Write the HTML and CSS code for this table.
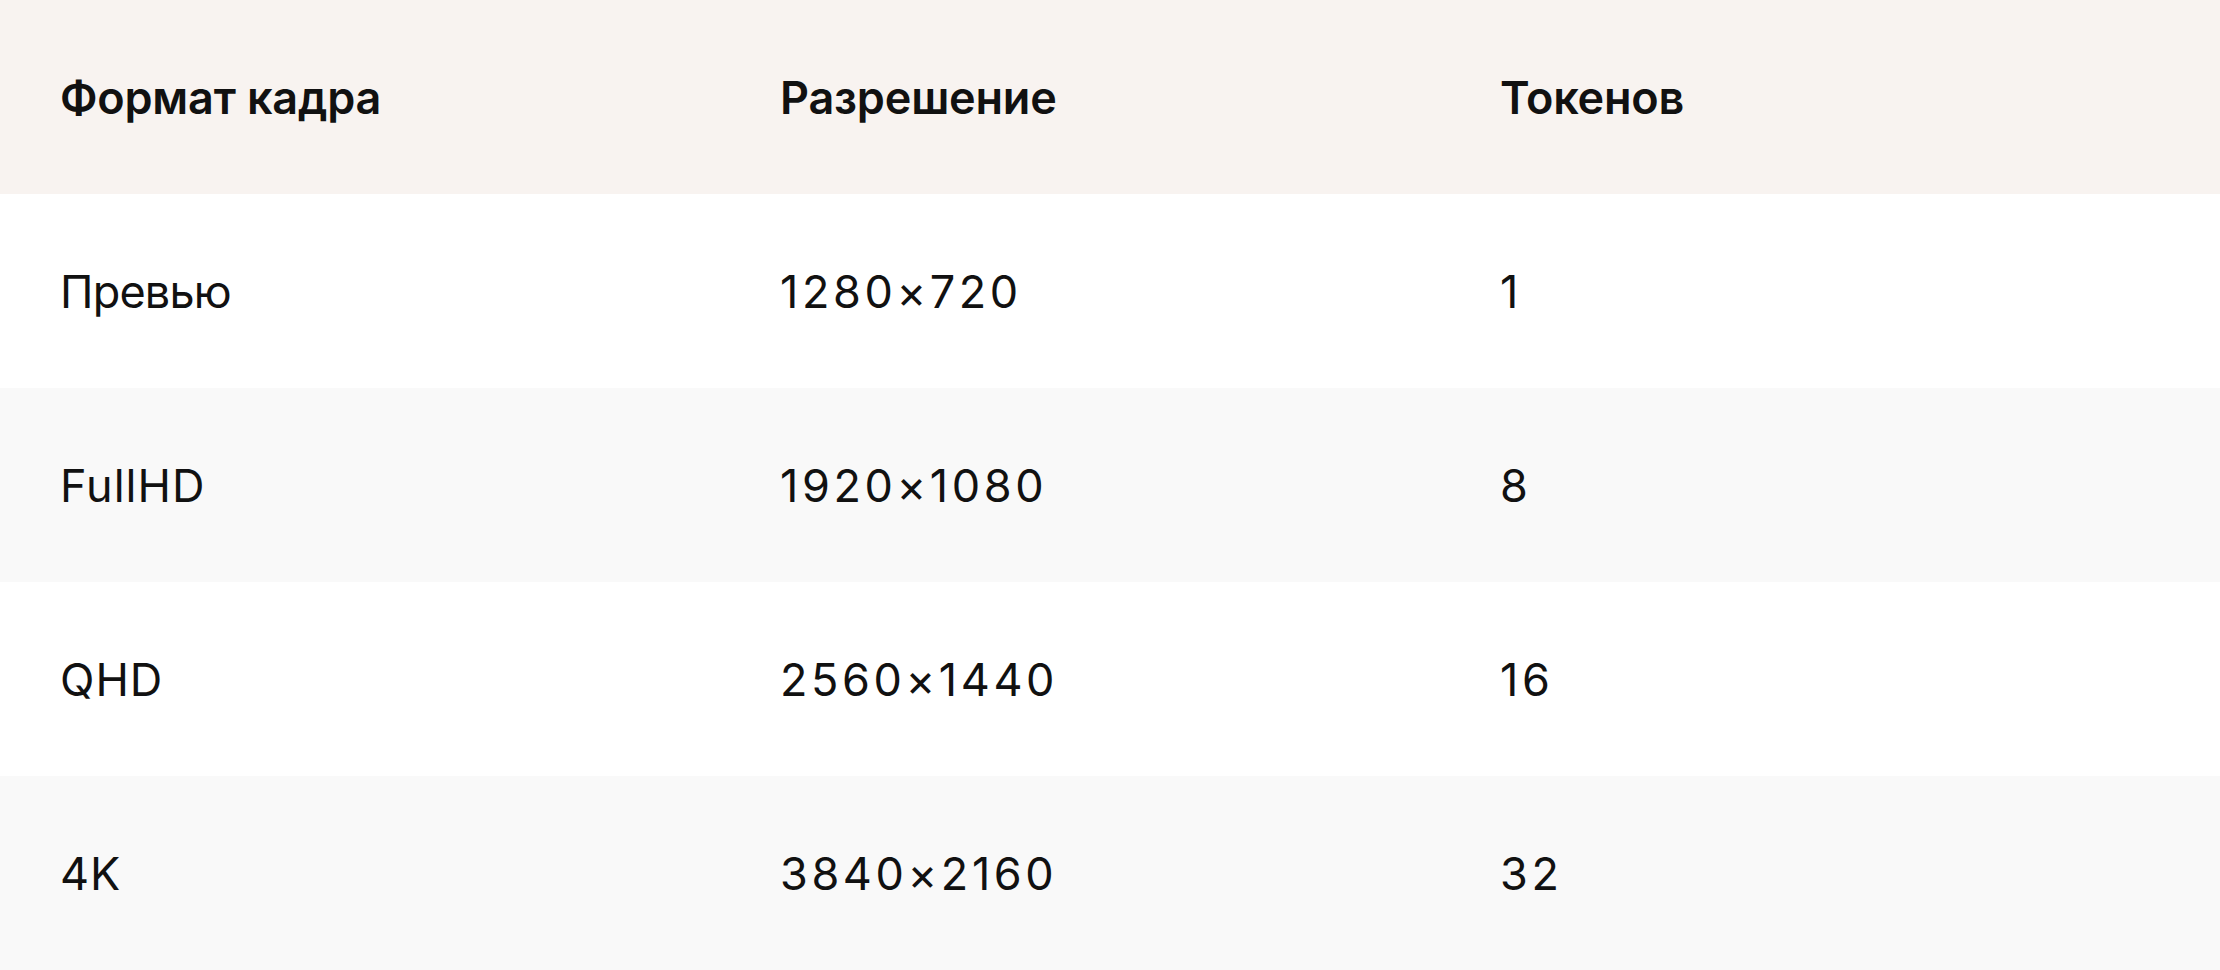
FILE: index.html
```html
<!DOCTYPE html>
<html lang="ru">
<head>
<meta charset="utf-8">
<title>Форматы кадра</title>
<link rel="stylesheet" href="styles.css">
</head>
<body>
<table class="formats">
  <colgroup>
    <col class="col-a">
    <col class="col-b">
    <col class="col-c">
  </colgroup>
  <thead>
    <tr class="head-row">
      <th>Формат кадра</th>
      <th>Разрешение</th>
      <th>Токенов</th>
    </tr>
  </thead>
  <tbody>
    <tr class="row row-light">
      <td class="name">Превью</td>
      <td class="num">1280×720</td>
      <td class="num">1</td>
    </tr>
    <tr class="row row-grey">
      <td class="name latin">FullHD</td>
      <td class="num">1920×1080</td>
      <td class="num">8</td>
    </tr>
    <tr class="row row-light">
      <td class="name latin">QHD</td>
      <td class="num">2560×1440</td>
      <td class="num">16</td>
    </tr>
    <tr class="row row-grey">
      <td class="name latin">4K</td>
      <td class="num">3840×2160</td>
      <td class="num">32</td>
    </tr>
  </tbody>
</table>
</body>
</html>
```

FILE: styles.css
```css
html, body {
  margin: 0;
  padding: 0;
  background: #ffffff;
}

body {
  font-family: Inter, "Noto Sans", "Liberation Sans", sans-serif;
  color: #111111;
}

.formats {
  width: 2220px;
  border-collapse: collapse;
  table-layout: fixed;
}

.col-a { width: 720px; }
.col-b { width: 720px; }
.col-c { width: 780px; }

.formats th,
.formats td {
  height: 194px;
  padding: 0 0 0 60px;
  text-align: left;
  vertical-align: middle;
  font-size: 45px;
  line-height: 1;
  box-sizing: border-box;
}

.formats th {
  font-weight: 600;
  letter-spacing: -0.2px;
}

.formats td {
  font-weight: 400;
}

.formats td.name {
  letter-spacing: -0.8px;
}

.formats td.latin {
  letter-spacing: 1px;
}

.formats td.num {
  letter-spacing: 3.6px;
}

.head-row {
  background: #f8f3f0;
}

.row-light {
  background: #ffffff;
}

.row-grey {
  background: #f9f9f9;
}
```
